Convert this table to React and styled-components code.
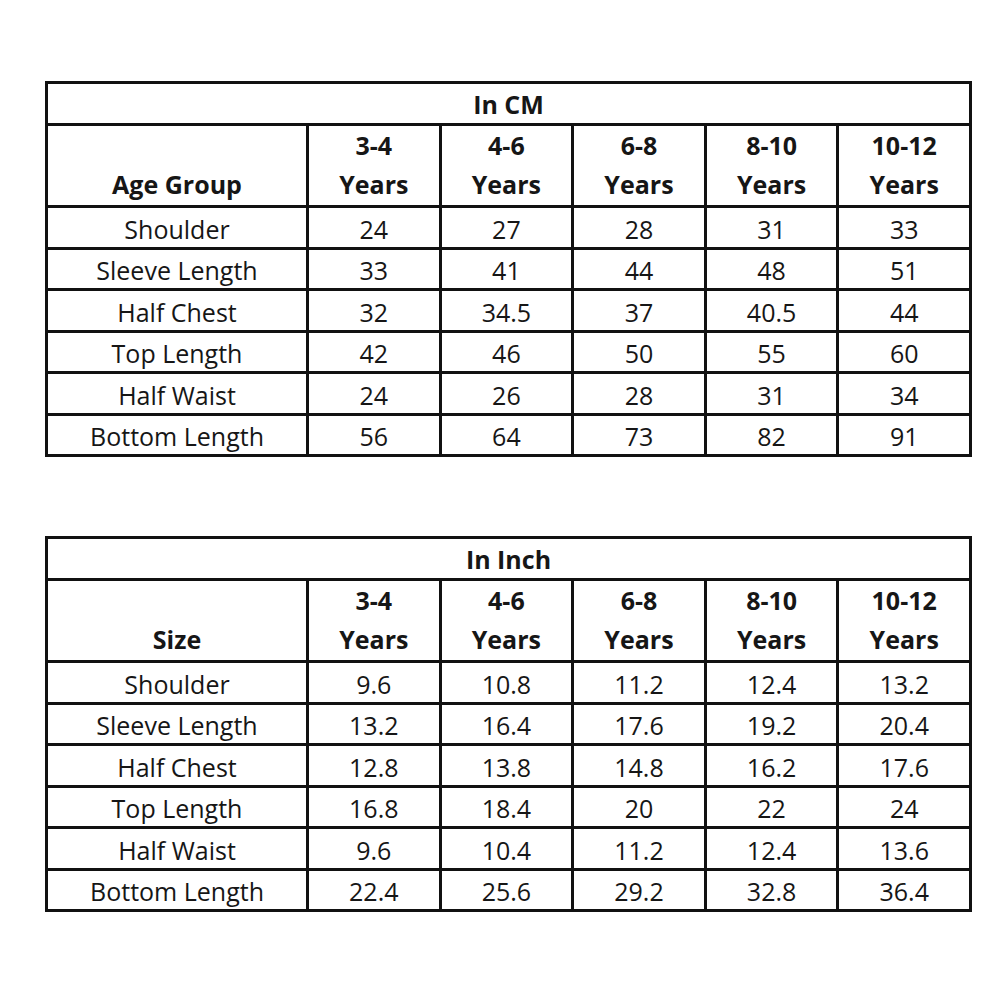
import React from 'react';
import styled, { createGlobalStyle } from 'styled-components';

const GlobalStyle = createGlobalStyle`
  body {
    margin: 0;
    background: #fff;
    font-family: 'Open Sans', 'Liberation Sans', sans-serif;
    color: #161616;
  }
`;

const ages = ['3-4', '4-6', '6-8', '8-10', '10-12'];

const tables = [
  {
    title: 'In CM',
    label: 'Age Group',
    rows: [
      ['Shoulder', '24', '27', '28', '31', '33'],
      ['Sleeve Length', '33', '41', '44', '48', '51'],
      ['Half Chest', '32', '34.5', '37', '40.5', '44'],
      ['Top Length', '42', '46', '50', '55', '60'],
      ['Half Waist', '24', '26', '28', '31', '34'],
      ['Bottom Length', '56', '64', '73', '82', '91'],
    ],
  },
  {
    title: 'In Inch',
    label: 'Size',
    rows: [
      ['Shoulder', '9.6', '10.8', '11.2', '12.4', '13.2'],
      ['Sleeve Length', '13.2', '16.4', '17.6', '19.2', '20.4'],
      ['Half Chest', '12.8', '13.8', '14.8', '16.2', '17.6'],
      ['Top Length', '16.8', '18.4', '20', '22', '24'],
      ['Half Waist', '9.6', '10.4', '11.2', '12.4', '13.6'],
      ['Bottom Length', '22.4', '25.6', '29.2', '32.8', '36.4'],
    ],
  },
];

const App = () => {
  return (
    <>
      <GlobalStyle />
      <Page>
        {tables.map((t) => (
          <SizeTable key={t.title}>
            <TitleCell>{t.title}</TitleCell>
            <HeadCell>{t.label}</HeadCell>
            {ages.map((a) => (
              <HeadCell key={a}>
                <span>{a}</span>
                <span>Years</span>
              </HeadCell>
            ))}
            {t.rows.map((row) =>
              row.map((v, i) => <Cell key={row[0] + i}>{v}</Cell>),
            )}
          </SizeTable>
        ))}
      </Page>
    </>
  );
};

export default App;

const Page = styled.div`
  display: flex;
  flex-direction: column;
  gap: 79px;
  padding: 81px 0 0 45px;
`;

const SizeTable = styled.div`
  display: grid;
  grid-template-columns: 258px repeat(5, 1fr);
  grid-template-rows: 39px 79px repeat(6, 38.5px);
  gap: 3px;
  width: 927px;
  padding: 3px;
  box-sizing: border-box;
  background: #111;
`;

const TitleCell = styled.div`
  grid-column: 1 / -1;
  display: flex;
  align-items: center;
  justify-content: center;
  background: #fff;
  font-size: 25px;
  font-weight: 700;
  line-height: 34px;
`;

const HeadCell = styled.div`
  display: flex;
  flex-direction: column;
  align-items: center;
  justify-content: flex-end;
  padding-bottom: 1px;
  background: #fff;
  font-size: 25px;
  font-weight: 700;
  line-height: 39px;
`;

const Cell = styled.div`
  display: flex;
  align-items: center;
  justify-content: center;
  padding-top: 3px;
  background: #fff;
  font-size: 25px;
  line-height: 34px;
`;
